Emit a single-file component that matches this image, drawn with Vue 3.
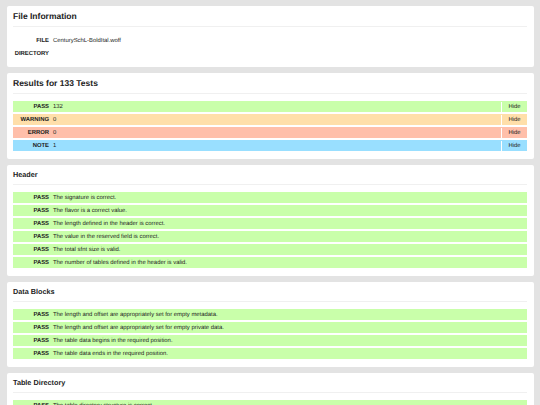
<script setup>
const summary = [
  { k: 'PASS', n: 132, c: 'pass' },
  { k: 'WARNING', n: 0, c: 'warn' },
  { k: 'ERROR', n: 0, c: 'err' },
  { k: 'NOTE', n: 1, c: 'note' }
]
const sections = [
  { title: 'Header', rows: ['The signature is correct.', 'The flavor is a correct value.', 'The length defined in the header is correct.', 'The value in the reserved field is correct.', 'The total sfnt size is valid.', 'The number of tables defined in the header is valid.'] },
  { title: 'Data Blocks', rows: ['The length and offset are appropriately set for empty metadata.', 'The length and offset are appropriately set for empty private data.', 'The table data begins in the required position.', 'The table data ends in the required position.'] },
  { title: 'Table Directory', rows: ['The table directory structure is correct.'] }
]
</script>

<template>
  <main class="page">
    <section class="card">
      <h1>File Information</h1>
      <div class="info">
        <div class="row"><b>FILE</b><span>CenturySchL-BoldItal.woff</span></div>
        <div class="row"><b>DIRECTORY</b><span></span></div>
      </div>
    </section>
    <section class="card">
      <h1>Results for 133 Tests</h1>
      <div class="rows">
        <div v-for="s in summary" :key="s.k" class="row" :class="s.c">
          <b>{{ s.k }}</b><span class="grow">{{ s.n }}</span><span class="hide">Hide</span>
        </div>
      </div>
    </section>
    <section v-for="sec in sections" :key="sec.title" class="card">
      <h2>{{ sec.title }}</h2>
      <div class="rows">
        <div v-for="r in sec.rows" :key="r" class="row pass"><b>PASS</b><span>{{ r }}</span></div>
      </div>
    </section>
  </main>
</template>

<style>
html, body { margin: 0; background: #e3e3e3; height: 405px; overflow: hidden; }
</style>

<style scoped>
.page {
  display: flex;
  flex-direction: column;
  gap: 6px;
  padding: 6px 6.5px;
  font-family: "Liberation Sans", Arial, sans-serif;
  color: #222;
  font-size: 5.9px;
  line-height: 7px;
  text-rendering: geometricPrecision;
}
.card {
  background: #fff;
  border-radius: 2px;
  padding: 0 6.5px 6.5px;
  flex: none;
}
h1, h2 {
  margin: 0 0 6.5px;
  border-bottom: 1px solid #f0f0f0;
  font-weight: bold;
  color: #222;
  display: flex;
  align-items: center;
  padding-top: 1px;
}
h1 { font-size: 8.5px; height: 19px; }
h2 { font-size: 7.25px; height: 18px; }
.info { padding-top: 0.5px; }
.rows { display: flex; flex-direction: column; }
.row {
  display: flex;
  align-items: center;
  height: 13px;
  box-sizing: border-box;
  padding-top: 1px;
}
.rows .row { border-bottom: 0.5px solid #fff; border-top: 0.5px solid #fff; }
.row b {
  width: 36px;
  text-align: right;
  margin-right: 4px;
  flex: none;
}
.grow { flex: 1; }
.hide {
  width: 26px;
  align-self: stretch;
  box-sizing: border-box;
  border-left: 0.5px solid #fff;
  display: flex;
  align-items: center;
  justify-content: center;
  flex: none;
}
.pass { background: #c9ffaa; }
.warn { background: #ffdfaa; }
.err { background: #ffbfaa; }
.note { background: #99dfff; }
</style>
